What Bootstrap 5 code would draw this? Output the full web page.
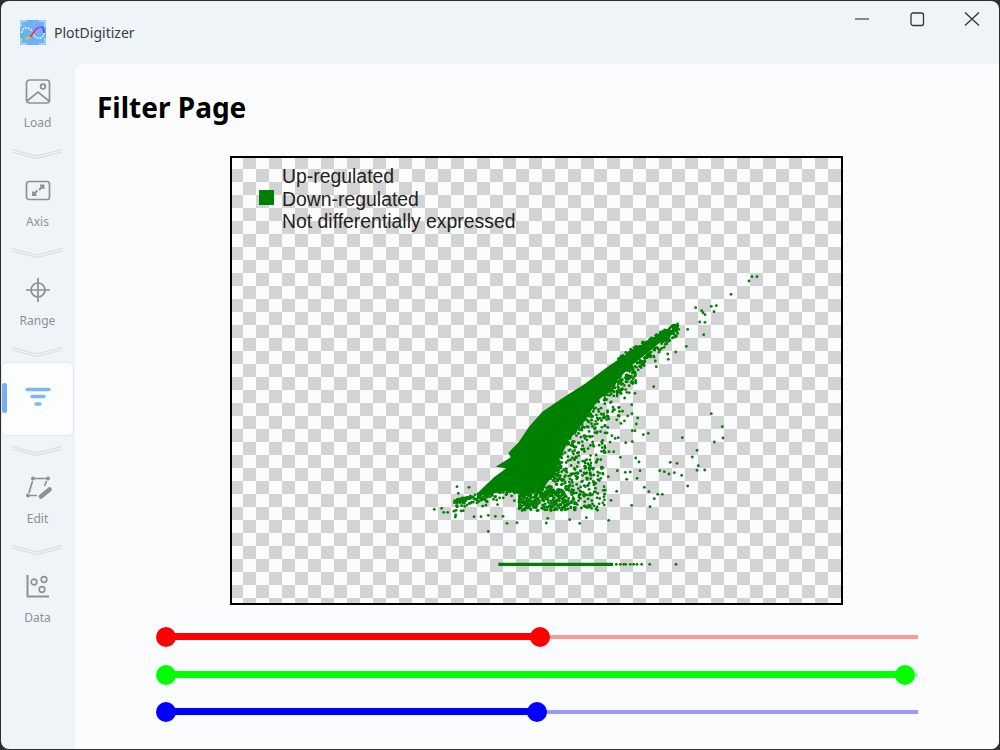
<!DOCTYPE html>
<html lang="en">
  <head>
    <meta charset="UTF-8" />
    <meta name="viewport" content="width=device-width, initial-scale=1.0" />
    <title>PlotDigitizer</title>
    <link
      href="https://cdn.jsdelivr.net/npm/bootstrap@5.3.2/dist/css/bootstrap.min.css"
      rel="stylesheet"
    />
    <style>
      html,
      body {
        height: 100%;
        overflow: hidden;
        background: #2e2e2e;
      }
      .app-window {
        width: 1000px;
        height: 750px;
        padding: 1px 1px 1px 1px;
      }
      .app-frame {
        height: 100%;
        background: #eff4f9;
        border-radius: 8px;
        overflow: hidden;
        font-family: "Noto Sans", sans-serif;
      }
      .title-bar {
        height: 63px;
        padding-left: 19px;
      }
      .app-name {
        font-size: 14px;
        color: #3a3d40;
        margin-left: 8px;
      }
      .win-controls {
        height: 36px;
        margin-top: -27px;
        align-self: center;
      }
      .win-btn {
        width: 55px;
      }
      .side-rail {
        width: 74px;
        flex: none;
        padding-top: 1px;
      }
      .rail-item {
        height: 74px;
        padding-top: 13px;
        margin-right: 1px;
        color: #8d9094;
        font-size: 12px;
        line-height: 16px;
      }
      .rail-item svg {
        display: block;
        height: 28px;
        width: 28px;
        margin-bottom: 9px;
      }
      .rail-item.is-active {
        background: #fcfdfe;
        border: 1px solid #e4e7eb;
        border-radius: 6px;
        padding-top: 19px;
        color: #7cb8ef;
      }
      .rail-marker {
        position: absolute;
        left: 0;
        top: 20px;
        width: 5px;
        height: 30px;
        border-radius: 3px;
        background: #6fb1f1;
      }
      .rail-sep {
        height: 25px;
      }
      .page-pane {
        background: #fbfcfe;
        border-top-left-radius: 8px;
        margin-right: 0;
        min-width: 0;
      }
      .page-title {
        font-family: "Noto Sans", sans-serif;
        font-size: 28px;
        font-weight: 700;
        color: #000;
        margin: 25px 0 31px 22px;
        line-height: 36px;
      }
      .plot-box {
        width: 613px;
        height: 449px;
        margin-left: 155px;
        border: 2px solid #000;
        background-color: #fbfcfe;
        background-image: conic-gradient(
          #d3d3d3 25%,
          #fbfcfe 0 50%,
          #d3d3d3 0 75%,
          #fbfcfe 0
        );
        background-size: 26px 26px;
        background-position: -2px -2px;
        position: relative;
      }
      .plot-svg {
        position: absolute;
        left: 0;
        top: 0;
        width: 100%;
        height: 100%;
      }
      .plot-legend {
        position: absolute;
        left: 50px;
        top: 7px;
        font-family: "Liberation Sans", Arial, sans-serif;
        font-size: 19.4px;
        line-height: 22.5px;
        color: #222;
      }
      .plot-legend span {
        display: block;
      }
      .legend-swatch {
        position: absolute;
        left: 27px;
        top: 32px;
        width: 15px;
        height: 15px;
        background: #008000;
      }
      .slider-stack {
        margin: 22px 0 0 81px;
        width: 762px;
        gap: 17.6px;
      }
      .range-row {
        position: relative;
        height: 20px;
        margin-left: 10px;
      }
      .range-track {
        position: absolute;
        left: 0;
        right: 0;
        top: 8px;
        height: 4px;
      }
      .range-fill {
        position: absolute;
        left: 0;
        top: 6px;
        height: 7px;
      }
      .range-thumb {
        position: absolute;
        top: 0;
        width: 20px;
        height: 20px;
        margin-left: -10px;
        border-radius: 50%;
      }
    </style>
  </head>

  <body>
    <div class="app-window">
      <div class="app-frame d-flex flex-column">
        <div class="title-bar d-flex align-items-center flex-none">
          <svg width="26" height="26" viewBox="0 0 26 26">
            <rect width="26" height="25" fill="#6db1f6" />
            <path d="M1 7V1h6M19 1h6v6M25 18v6h-6M7 24H1v-6" fill="none" stroke="#d6e9fb" stroke-width="1" />
            <path d="M2 13c0-8 9-6 11 0" fill="none" stroke="#e9f3fb" stroke-width="1.5" stroke-dasharray="2 1" />
            <path d="M2 13c0 3 1 5 3 5.500" fill="none" stroke="#4bd07a" stroke-width="1.7" />
            <path d="M5 18.500c3 .5 6-2 8-5.500" fill="none" stroke="#f6c23c" stroke-width="1.7" />
            <path d="M13 13c2-3 5-6 8-6" fill="none" stroke="#e02bb4" stroke-width="1.7" />
            <path d="M21 7c2 0 3 3 3 6" fill="none" stroke="#5b3ff0" stroke-width="1.7" />
            <path d="M13 13c2 7 11 7 11 0" fill="none" stroke="#e9f3fb" stroke-width="1.5" stroke-dasharray="2 1" />
            <path d="M10 17l4-5" fill="none" stroke="#e8303a" stroke-width="1.8" />
          </svg>
          <span class="app-name">PlotDigitizer</span>
          <div class="win-controls ms-auto d-flex">
            <div class="win-btn d-flex align-items-center justify-content-center">
              <svg width="16" height="16" viewBox="0 0 16 16"><path d="M1 8h14" stroke="#222" stroke-width="1.2" /></svg>
            </div>
            <div class="win-btn d-flex align-items-center justify-content-center">
              <svg width="16" height="16" viewBox="0 0 16 16"><rect x="2" y="2" width="12.5" height="12.5" rx="2" fill="none" stroke="#333" stroke-width="1.3" /></svg>
            </div>
            <div class="win-btn d-flex align-items-center justify-content-center">
              <svg width="16" height="16" viewBox="0 0 16 16"><path d="M1 1.500l14 13M15 1.500l-14 13" stroke="#333" stroke-width="1.3" /></svg>
            </div>
          </div>
        </div>

        <div class="d-flex flex-grow-1" style="min-height: 0">
          <nav class="side-rail d-flex flex-column">
            <div class="rail-item d-flex flex-column align-items-center">
              <svg viewBox="0 0 28 28" fill="none" stroke="currentColor" stroke-width="1.7">
                <rect x="2.500" y="2" width="23" height="23" rx="3" />
                <circle cx="19" cy="8.500" r="2.400" />
                <path d="M3 23l11-9 11 9" />
              </svg>
              Load
            </div>
            <div class="rail-sep"></div>
            <div class="rail-item d-flex flex-column align-items-center">
              <svg viewBox="0 0 28 28" fill="none" stroke="currentColor" stroke-width="1.7">
                <rect x="2.500" y="4.500" width="23" height="18" rx="2.500" />
                <path d="M9 18l4.500-4.500M9 14.500V18h3.500M19.500 8.500L15 13M16 8.500h3.500V12" stroke-width="1.900" />
              </svg>
              Axis
            </div>
            <div class="rail-sep"></div>
            <div class="rail-item d-flex flex-column align-items-center">
              <svg viewBox="0 0 28 28" fill="none" stroke="currentColor" stroke-width="1.7">
                <circle cx="14" cy="14" r="7" />
                <path d="M14 2v24M2 14h24" />
              </svg>
              Range
            </div>
            <div class="rail-sep"></div>
            <div class="rail-item is-active position-relative d-flex flex-column align-items-center">
              <span class="rail-marker"></span>
              <svg viewBox="0 0 28 28" fill="none" stroke="currentColor" stroke-width="3.400" stroke-linecap="round">
                <path d="M3 7.500h22M8 14.500h12M12 22h4" />
              </svg>
            </div>
            <div class="rail-sep"></div>
            <div class="rail-item d-flex flex-column align-items-center">
              <svg viewBox="0 0 28 28" fill="none" stroke="currentColor" stroke-width="1.7">
                <circle cx="9" cy="4.500" r="2" fill="currentColor" stroke="none" />
                <circle cx="24" cy="4.500" r="2" fill="currentColor" stroke="none" />
                <circle cx="4" cy="21.500" r="2" fill="currentColor" stroke="none" />
                <path d="M11 4.500h11M8.500 7l-3.500 12M6 21.500h7M22.500 7l-2 5" />
                <path d="M17 22.500l8.500-7" stroke-width="4.500" stroke-linecap="round" />
              </svg>
              Edit
            </div>
            <div class="rail-sep"></div>
            <div class="rail-item d-flex flex-column align-items-center">
              <svg viewBox="0 0 28 28" fill="none" stroke="currentColor" stroke-width="1.7">
                <path d="M3.500 2v21.500H25" stroke-width="2" />
                <circle cx="10" cy="9" r="2.800" />
                <circle cx="20" cy="6.500" r="2.800" />
                <circle cx="18" cy="16.500" r="2.800" />
              </svg>
              Data
            </div>
          </nav>

          <main class="page-pane flex-grow-1">
            <h1 class="page-title">Filter Page</h1>
            <div class="plot-box">
              <svg class="plot-svg" id="plot" viewBox="0 0 609 445"></svg>
              <div class="legend-swatch"></div>
              <div class="plot-legend">
                <span>Up-regulated</span>
                <span>Down-regulated</span>
                <span>Not differentially expressed</span>
              </div>
            </div>
            <div class="slider-stack d-flex flex-column" id="sliders"></div>
          </main>
        </div>
      </div>
    </div>

    <script src="https://cdn.jsdelivr.net/npm/bootstrap@5.3.2/dist/js/bootstrap.bundle.min.js"></script>
    <script>
      // separators between the rail items
      document.querySelectorAll(".rail-sep").forEach((sep) => {
        sep.innerHTML =
          '<svg width="74" height="25" viewBox="0 0 74 25" fill="none" stroke="#d6d9dc" stroke-width="1">' +
          '<path d="M11 9.500l25 6.500 25-6.500M11 12l25 6.500 25-6.500" /></svg>';
      });

      // sliders: value in pixels along the 752px track
      const sliders = [
        { color: "#ff0000", faded: "#ff9999", value: 374 },
        { color: "#00ff00", faded: "#99ff99", value: 739 },
        { color: "#0000ff", faded: "#9999ff", value: 371 },
      ];
      document.getElementById("sliders").innerHTML = sliders
        .map(
          (s) => `<div class="range-row">
            <div class="range-track" style="background:${s.faded}"></div>
            <div class="range-fill" style="width:${s.value}px;background:${s.color}"></div>
            <div class="range-thumb" style="left:0;background:${s.color}"></div>
            <div class="range-thumb" style="left:${s.value}px;background:${s.color}"></div>
          </div>`
        )
        .join("");

      // scatter: zoom-crop coordinates (3x, origin 420,260) to plot coordinates
      const toX = (x) => x / 3 + 420 - 233;
      const toY = (y) => y / 3 + 260 - 158;
      const blob = [
        [175, 700], [225, 652], [262, 625], [230, 620], [275, 592], [268, 578],
        [300, 545], [330, 500], [370, 455], [430, 415], [500, 370], [560, 325], [610, 290],
        [690, 240], [740, 210], [750, 225], [690, 275], [640, 315], [600, 355],
        [565, 395], [530, 430], [500, 480], [450, 540], [420, 600], [400, 650], [360, 695],
        [300, 702], [250, 692], [200, 708],
      ];
      const lowerEdge = [
        [770, 210], [700, 280], [640, 325], [600, 360], [565, 395], [530, 430], [500, 480],
        [450, 540], [420, 600], [400, 650], [360, 695],
      ];
      const loose = [
        [46, 748], [68, 745], [74, 757], [86, 757], [110, 765], [133, 752], [165, 770],
        [186, 770], [208, 766], [208, 814], [229, 769], [252, 769], [264, 790], [294, 788],
        [382, 789], [386, 775], [452, 779], [482, 790], [502, 773], [569, 781], [638, 736],
        [693, 740], [706, 716], [716, 703], [730, 703], [690, 695], [676, 682], [806, 678],
        [788, 646], [766, 638], [750, 642], [736, 635], [722, 632], [834, 631], [838, 617],
        [857, 630], [820, 591], [834, 571], [754, 607], [774, 610], [886, 546], [912, 534],
        [910, 500], [877, 461], [790, 533], [688, 520], [673, 524], [656, 474], [652, 492],
        [640, 512], [648, 512], [639, 461], [638, 434], [631, 398], [648, 400], [617, 414],
        [650, 367], [704, 380], [802, 259], [854, 224], [770, 276], [748, 298], [746, 282],
        [712, 320], [709, 303], [936, 103], [990, 63], [999, 50], [1014, 50], [892, 137],
        [877, 139], [885, 155], [830, 143], [848, 152], [852, 158], [858, 164], [842, 186],
        [858, 187], [806, 208], [620, 548], [640, 545], [598, 533], [650, 594], [660, 606],
        [663, 632], [634, 636], [619, 637], [623, 658], [654, 655], [604, 592], [593, 694],
        [576, 721], [570, 575], [584, 575], [548, 546], [568, 650], [545, 655], [595, 632],
        [114, 680], [118, 700], [150, 682],
      ];
      // dense speckle below the solid part, seeded so each run draws the same
      let seed = 7;
      const rnd = () => ((seed = (seed * 16807) % 2147483647) - 1) / 2147483646;
      const speck = [];
      for (let i = 0; i < 520; i++) {
        const u = rnd() * (lowerEdge.length - 1);
        const k = Math.floor(u);
        const f = u - k;
        const ex = lowerEdge[k][0] + (lowerEdge[k + 1][0] - lowerEdge[k][0]) * f;
        const ey = lowerEdge[k][1] + (lowerEdge[k + 1][1] - lowerEdge[k][1]) * f;
        const reach = k < 2 ? 22 : k < 4 ? 50 : k < 8 ? 125 : 80;
        const depth = rnd() * Math.sqrt(rnd()) * reach;
        speck.push([ex + depth * 0.65 - 4, ey + depth * 0.75 - 4]);
      }
      // loose cloud right of the solid part and below it
      for (let i = 0; i < 430; i++) {
        const x = 300 + Math.pow(rnd(), 1.3) * 260;
        const top = x < 430 ? 688 : 688 - (x - 430) * 1.2;
        speck.push([x, top + rnd() * (752 - top)]);
      }
      // the left tail, thick near the solid part and thinning out to the left
      for (let i = 0; i < 230; i++) {
        const x = 105 + rnd() * 240;
        const base = x < 300 ? 735 - (x - 105) * 0.28 : 695;
        speck.push([x, base - 14 + rnd() * rnd() * 55]);
      }
      // fuzz along the top of the upper right band
      for (let i = 0; i < 190; i++) {
        const t = rnd();
        speck.push([600 + t * 175 + (rnd() - 0.4) * 16, 300 - t * 100 + (rnd() - 0.6) * 18]);
      }
      let out = `<polygon fill="#008000" points="${blob
        .map((p) => toX(p[0]) + "," + toY(p[1]))
        .join(" ")}" />`;
      speck.concat(loose).forEach((p) => {
        out += `<circle cx="${toX(p[0]).toFixed(1)}" cy="${toY(p[1]).toFixed(1)}" r="1.400" fill="#008000" />`;
      });
      // flat run of points along the bottom
      out += `<path d="M${toX(238)} ${toY(913)}H${toX(582)}" stroke="#008000" stroke-width="3.200" />`;
      [592, 604, 614, 620, 634, 644, 654, 668, 692, 771].forEach((x) => {
        out += `<circle cx="${toX(x)}" cy="${toY(913)}" r="1.400" fill="#008000" />`;
      });
      document.getElementById("plot").innerHTML = out;
    </script>
  </body>
</html>
